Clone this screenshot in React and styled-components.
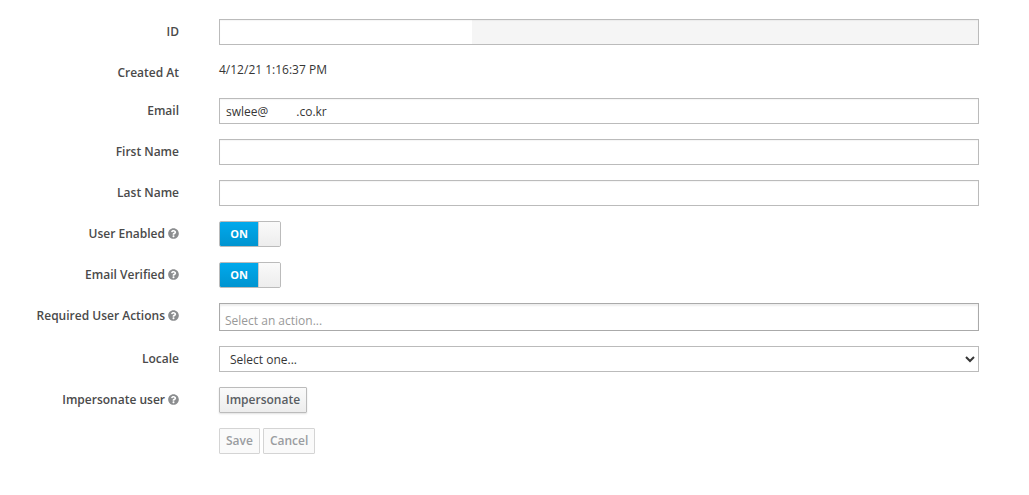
import React from "react";
import styled, { createGlobalStyle } from "styled-components";
import { FaQuestionCircle } from "react-icons/fa";

const Global = createGlobalStyle`
  html, body { margin: 0; padding: 0; background: #fff; }
  body { font-family: "Open Sans", "Noto Sans", sans-serif; font-size: 12px; color: #363636; }
  * { box-sizing: border-box; }
`;
const Form = styled.form`
  display: flex;
  flex-direction: column;
  width: 1029px;
  height: 495px;
  padding: 19px 50px 0 0;
`;
const Row = styled.div`
  display: flex;
  margin-bottom: ${(p) => p.$after || 15}px;
  min-height: ${(p) => p.$min || 26}px;
`;
const Label = styled.label`
  flex: 0 0 179px;
  display: flex;
  justify-content: flex-end;
  align-items: center;
  gap: 3px;
  height: 24px;
  margin-right: 40px;
  font-size: 12px;
  font-weight: 600;
  color: #4a4a4a;
`;
const Help = styled(FaQuestionCircle)`
  width: 11px;
  height: 11px;
  color: #8b8d8f;
`;
const Field = styled.div`
  flex: 1;
  display: flex;
  align-items: flex-start;
  gap: 3px;
`;
const TextBox = styled.div`
  width: 100%;
  height: 26px;
  display: flex;
  align-items: center;
  padding: 0 6px;
  border: 1px solid #bbb;
  background: #fff;
  color: #363636;
  box-shadow: inset 0 1px 1px rgba(0, 0, 0, 0.04);
`;
const ReadOnlyBox = styled(TextBox)`
  background: linear-gradient(to right, #fff 252px, #f5f5f5 252px);
`;
const Redacted = styled.span`
  display: inline-block;
  width: ${(p) => p.$w}px;
`;
const Stamp = styled.span`
  margin-top: 1px;
  line-height: 18px;
  color: #363636;
`;
const ActionsBox = styled(TextBox)`
  height: 28px;
  padding: 6px 5px 0;
  color: #999;
  border-color: #aaa;
  box-shadow: inset 0 2px 2px rgba(0, 0, 0, 0.07);
`;
const Select = styled.select`
  width: 100%;
  height: 26px;
  padding: 0 6px;
  border: 1px solid #bbb;
  border-radius: 0;
  background: #fff;
  color: #363636;
  font: 12px "Open Sans", sans-serif;
`;
const Switch = styled.div`
  display: flex;
  width: 62px;
  height: 26px;
  border: 1px solid #bbb;
  border-radius: 2px;
  overflow: hidden;
`;
const SwitchOn = styled.div`
  flex: 0 0 38px;
  display: flex;
  align-items: center;
  justify-content: center;
  padding-bottom: 2px;
  background: linear-gradient(to bottom, #00a9ec, #0094d0);
  color: #fff;
  font-size: 11px;
  font-weight: 700;
`;
const SwitchKnob = styled.div`
  flex: 1;
  border-left: 1px solid #ccc;
  background: linear-gradient(to bottom, #fafafa, #ededed);
`;
const Button = styled.button`
  height: 26px;
  padding: 0 6px 2px;
  border: 1px solid #bbb;
  border-radius: 1px;
  background: linear-gradient(to bottom, #fafafa, #ededed);
  color: #5a5e63;
  font: 600 12px "Open Sans", sans-serif;
  box-shadow: 0 1px 2px rgba(0, 0, 0, 0.12);
`;
const MutedButton = styled(Button)`
  border-color: #d4d4d4;
  background: #fafafa;
  color: #9a9da1;
  box-shadow: none;
`;

const Toggle = () => (
  <Switch>
    <SwitchOn>ON</SwitchOn>
    <SwitchKnob />
  </Switch>
);

export default function App() {
  return (
    <>
      <Global />
      <Form onSubmit={(e) => e.preventDefault()}>
        <Row>
          <Label>ID</Label>
          <Field><ReadOnlyBox /></Field>
        </Row>
        <Row $min={24} $after={14}>
          <Label>Created At</Label>
          <Field><Stamp>4/12/21 1:16:37 PM</Stamp></Field>
        </Row>
        <Row>
          <Label>Email</Label>
          <Field><TextBox>swlee@<Redacted $w={28} />.co.kr</TextBox></Field>
        </Row>
        <Row>
          <Label>First Name</Label>
          <Field><TextBox /></Field>
        </Row>
        <Row>
          <Label>Last Name</Label>
          <Field><TextBox /></Field>
        </Row>
        <Row>
          <Label>User Enabled <Help /></Label>
          <Field><Toggle /></Field>
        </Row>
        <Row>
          <Label>Email Verified <Help /></Label>
          <Field><Toggle /></Field>
        </Row>
        <Row $min={28}>
          <Label>Required User Actions <Help /></Label>
          <Field><ActionsBox>Select an action...</ActionsBox></Field>
        </Row>
        <Row>
          <Label>Locale</Label>
          <Field>
            <Select defaultValue="">
              <option value="">Select one...</option>
            </Select>
          </Field>
        </Row>
        <Row>
          <Label>Impersonate user <Help /></Label>
          <Field><Button type="button">Impersonate</Button></Field>
        </Row>
        <Row>
          <Label />
          <Field>
            <MutedButton type="button">Save</MutedButton>
            <MutedButton type="button">Cancel</MutedButton>
          </Field>
        </Row>
      </Form>
    </>
  );
}
